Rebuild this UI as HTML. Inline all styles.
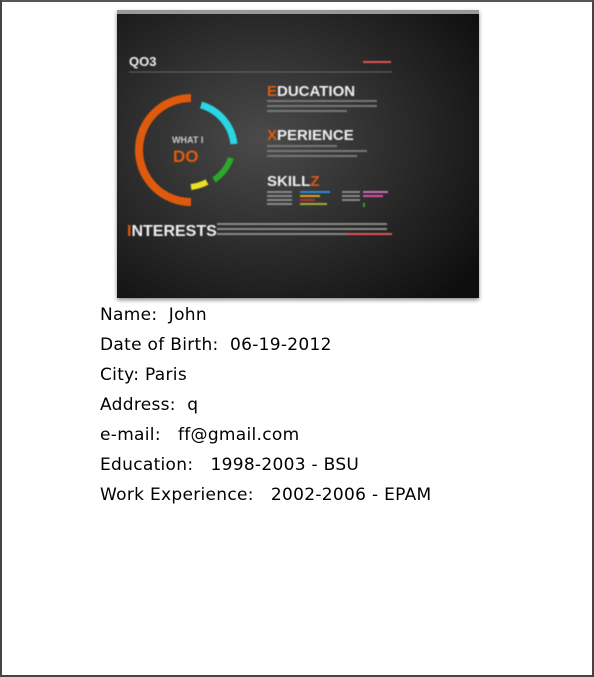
<!DOCTYPE html>
<html><head><meta charset="utf-8"><style>
html,body{margin:0;padding:0;background:#fff;}
body{width:594px;height:677px;position:relative;overflow:hidden;font-family:"DejaVu Sans","Liberation Sans",sans-serif;}
.frame{position:absolute;left:0;top:0;width:590px;height:673px;border:2px solid #444;border-top-color:#555;}
.img{position:absolute;left:117px;top:10px;width:362px;height:288px;box-shadow:0 2px 4px #888;}
.info{position:absolute;left:100px;top:303px;font-size:17px;color:#000;}
.info div{height:30px;line-height:24px;white-space:pre;letter-spacing:0.3px;}
</style></head><body>
<div class="frame"></div>
<svg class="img" viewBox="0 0 362 288" xmlns="http://www.w3.org/2000/svg">
<defs><radialGradient id="g" cx="0.4" cy="0.45" r="0.75"><stop offset="0" stop-color="#4a4a4a"/><stop offset="0.6" stop-color="#262626"/><stop offset="1" stop-color="#0e0e0e"/></radialGradient>
<filter id="b"><feGaussianBlur stdDeviation="0.6"/></filter></defs>
<rect width="362" height="288" fill="url(#g)"/>
<rect width="362" height="4" fill="#999"/>
<g filter="url(#b)">
<text x="12" y="56" fill="#eee" font-size="13" font-weight="bold" font-family="Liberation Sans">QO3</text>
<line x1="12" y1="62" x2="275" y2="62" stroke="#777" stroke-width="0.8"/>
<rect x="246" y="51" width="28" height="2" fill="#d55"/>
<path d="M74 88 A52 52 0 1 0 74 192" fill="none" stroke="#e05a10" stroke-width="8"/>
<path d="M84 95 A46 46 0 0 1 117 134" fill="none" stroke="#2ad6e4" stroke-width="7"/>
<path d="M114 148 A46 46 0 0 1 97 170" fill="none" stroke="#2aa82a" stroke-width="6"/>
<path d="M90 172 A46 46 0 0 1 74 177" fill="none" stroke="#e8e020" stroke-width="6"/>
<text x="55" y="133" fill="#ccc" font-size="9" font-weight="bold" font-family="Liberation Sans">WHAT I</text>
<text x="56" y="152" fill="#e05a10" font-size="17" font-weight="bold" font-family="Liberation Sans">DO</text>
<text x="150" y="86" fill="#eee" font-size="15" font-weight="bold" font-family="Liberation Sans"><tspan fill="#e05a10">E</tspan>DUCATION</text>
<rect x="150" y="90" width="110" height="2" fill="#777"/><rect x="150" y="95" width="110" height="2" fill="#777"/><rect x="150" y="100" width="80" height="2" fill="#777"/>
<text x="150" y="130" fill="#eee" font-size="15" font-weight="bold" font-family="Liberation Sans"><tspan fill="#e05a10">X</tspan>PERIENCE</text>
<rect x="150" y="135" width="70" height="2" fill="#777"/><rect x="150" y="140" width="100" height="2" fill="#777"/><rect x="150" y="145" width="90" height="2" fill="#777"/>
<text x="150" y="176" fill="#eee" font-size="15" font-weight="bold" font-family="Liberation Sans">SKILL<tspan fill="#e05a10">Z</tspan></text>
<rect x="150" y="181" width="25" height="2" fill="#888"/><rect x="183" y="181" width="30" height="2" fill="#2a8ee0"/>
<rect x="150" y="185" width="25" height="2" fill="#888"/><rect x="183" y="185" width="20" height="2" fill="#e0a020"/>
<rect x="150" y="189" width="25" height="2" fill="#888"/><rect x="183" y="189" width="15" height="2" fill="#c03030"/>
<rect x="150" y="193" width="25" height="2" fill="#888"/><rect x="183" y="193" width="27" height="2" fill="#a0b030"/>
<rect x="225" y="181" width="18" height="2" fill="#888"/><rect x="246" y="181" width="25" height="2" fill="#c070c0"/>
<rect x="225" y="185" width="18" height="2" fill="#888"/><rect x="246" y="185" width="20" height="2" fill="#e050a0"/>
<rect x="225" y="189" width="18" height="2" fill="#888"/><rect x="246" y="193" width="2" height="4" fill="#2aa82a"/>
<text x="10" y="226" fill="#eee" font-size="16" font-weight="bold" font-family="Liberation Sans"><tspan fill="#e05a10">I</tspan>NTERESTS</text>
<rect x="100" y="213" width="170" height="2" fill="#888"/><rect x="100" y="218" width="170" height="2" fill="#888"/><rect x="100" y="223" width="130" height="2" fill="#888"/><rect x="230" y="223" width="45" height="2" fill="#d55"/>
</g>
</svg>
<div class="info">
<div>Name:  John</div>
<div>Date of Birth:  06-19-2012</div>
<div>City: Paris</div>
<div>Address:  q</div>
<div>e-mail:   ff@gmail.com</div>
<div>Education:   1998-2003 - BSU</div>
<div>Work Experience:   2002-2006 - EPAM</div>
</div>
</body></html>
